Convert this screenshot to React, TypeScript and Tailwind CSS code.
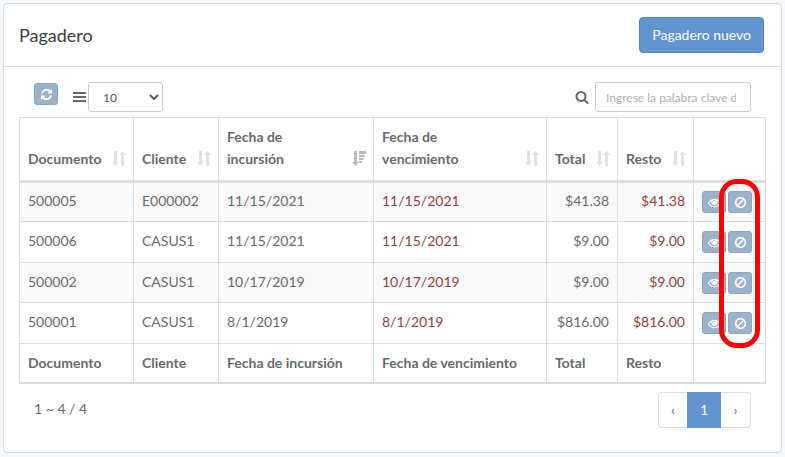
import React from 'react';

const paths = {
  refresh:
    'M1639 1056q0 5-1 7-64 268-268 434.5t-478 166.5q-146 0-282.5-55t-243.5-157l-129 129q-19 19-45 19t-45-19-19-45v-448q0-26 19-45t45-19h448q26 0 45 19t19 45-19 45l-137 137q71 66 161 102t187 36q134 0 250-65t186-179q11-17 53-117 8-23 30-23h192q13 0 22.5 9.5t9.5 22.5zm25-800v448q0 26-19 45t-45 19h-448q-26 0-45-19t-19-45 19-45l138-138q-148-137-349-137-134 0-250 65t-186 179q-11 17-53 117-8 23-30 23h-199q-13 0-22.5-9.5t-9.5-22.5v-7q65-268 270-434.5t480-166.5q146 0 284 55.5t245 156.5l130-129q19-19 45-19t45 19 19 45z',
  eye: 'M1664 960q-152-236-381-353 61 104 61 225 0 185-131.5 316.5t-316.5 131.5-316.5-131.5-131.5-316.5q0-121 61-225-229 117-381 353 133 205 333.5 326.5t434.5 121.5 434.5-121.5 333.5-326.5zm-720-384q0-20-14-34t-34-14q-125 0-214.5 89.5t-89.5 214.5q0 20 14 34t34 14 34-14 14-34q0-86 61-147t147-61q20 0 34-14t14-34zm848 384q0 34-20 69-140 230-376.5 368.5t-499.5 138.5-499.5-139-376.5-368q-20-35-20-69t20-69q140-229 376.5-368t499.5-139 499.5 139 376.5 368q20 35 20 69z',
  ban: 'M1440 893q0-161-87-295l-754 753q137 89 297 89 111 0 211.5-43.5t173.5-116.5 116-174.5 43-212.5zm-999 299l755-754q-135-91-300-91-148 0-273 73t-198 199-73 274q0 162 89 299zm1223-299q0 157-61 300t-163.5 246-245 164-298.5 61-298.5-61-245-164-163.5-246-61-300 61-299.5 163.5-245.5 245-164 298.5-61 298.5 61 245 164 163.5 245.5 61 299.5z',
  search:
    'M1216 832q0-185-131.5-316.5t-316.5-131.5-316.5 131.5-131.5 316.5 131.5 316.5 316.5 131.5 316.5-131.5 131.5-316.5zm512 832q0 52-38 90t-90 38q-54 0-90-38l-343-342q-179 124-399 124-143 0-273.5-55.5t-225-150-150-225-55.5-273.5 55.5-273.5 150-225 225-150 273.5-55.5 273.5 55.5 225 150 150 225 55.5 273.5q0 220-124 399l343 343q37 37 37 90z',
};

function Icon({ name, className }: { name: keyof typeof paths; className: string }) {
  return (
    <svg viewBox="0 0 1792 1792" fill="currentColor" className={className} aria-hidden="true">
      <path d={paths[name]} />
    </svg>
  );
}

function SortIcon({ active = false }: { active?: boolean }) {
  return active ? (
    <svg viewBox="0 0 14 15" fill="#b4b7bb" className="h-[15px] w-[14px] shrink-0" aria-hidden="true">
      <path d="M2 0h3v11h2L3.500 15 0 11h2zM7 0H14v3H7zM7 4H12.500v2H7zM7 7H11.500v2H7zM7 10H10v2H7z" />
    </svg>
  ) : (
    <svg viewBox="0 0 14 15" fill="#dfe1e4" className="h-[15px] w-[14px] shrink-0" aria-hidden="true">
      <path d="M2 0h3v11h2L3.500 15 0 11h2zM9 15h3V4h2L10.500 0 7 4h2z" />
    </svg>
  );
}

function SmallButton({ icon, label }: { icon: keyof typeof paths; label: string }) {
  return (
    <button
      type="button"
      aria-label={label}
      className="flex h-[22px] w-6 shrink-0 items-center justify-center rounded-[3px] border border-[#8ba6c1] bg-[#9cb2ca] text-white"
    >
      <Icon name={icon} className="size-[13px]" />
    </button>
  );
}

const columns = [
  { title: 'Documento', col: 'w-[114px]' },
  { title: 'Cliente', col: 'w-[85px]' },
  { title: 'Fecha de incursión', col: 'w-[155px]', active: true },
  { title: 'Fecha de vencimiento', col: '' },
  { title: 'Total', col: 'w-[71px]' },
  { title: 'Resto', col: 'w-[76px]' },
];

const rows = [
  ['500005', 'E000002', '11/15/2021', '11/15/2021', '$41.38', '$41.38'],
  ['500006', 'CASUS1', '11/15/2021', '11/15/2021', '$9.00', '$9.00'],
  ['500002', 'CASUS1', '10/17/2019', '10/17/2019', '$9.00', '$9.00'],
  ['500001', 'CASUS1', '8/1/2019', '8/1/2019', '$816.00', '$816.00'],
];

const cell = 'border border-[#dddddd] px-2 pt-0 pb-0.5';

export default function App() {
  return (
    <div className="min-h-screen bg-[#f5f7f9] p-[3px] pb-1 font-[Lato,sans-serif] text-sm leading-[22px] text-[#676a6c]">
      <main className="rounded border border-[#d5dee8] bg-white">
        <header className="flex items-center justify-between border-b border-[#d5dee8] pt-[13px] pr-[17px] pb-[13px] pl-[15px]">
          <h1 className="text-lg leading-6 text-[#3a3d40]">Pagadero</h1>
          <button
            type="button"
            className="h-9 rounded border border-[#5384bf] bg-[#6294cf] px-3 text-sm text-white"
          >
            Pagadero nuevo
          </button>
        </header>

        <div className="px-[15px] pt-[15px] pb-6">
          <div className="flex items-center justify-between px-[15px] pb-[5px]">
            <div className="flex items-center">
              <div className="mr-[15px] pb-1.5">
                <SmallButton icon="refresh" label="Actualizar" />
              </div>
              <label htmlFor="page-size" aria-label="Filas por página">
                <svg viewBox="0 0 13 10" fill="currentColor" className="mr-0.5 h-[10px] w-[13px]" aria-hidden="true">
                  <path d="M0 0h13v2H0zM0 4h13v2H0zM0 8h13v2H0z" />
                </svg>
              </label>
              <select
                id="page-size"
                defaultValue="10"
                className="h-[30px] w-[75px] rounded-[3px] border border-[#cccccc] bg-white pl-[10px] text-xs text-[#555555]"
              >
                <option>10</option>
                <option>25</option>
                <option>50</option>
              </select>
            </div>
            <div className="flex items-center gap-[6px]">
              <label htmlFor="search" aria-label="Buscar">
                <Icon name="search" className="size-[14px]" />
              </label>
              <input
                id="search"
                type="text"
                placeholder="Ingrese la palabra clave de búsqueda"
                className="h-[30px] w-[156px] rounded-[3px] border border-[#cccccc] pr-[14px] pl-[10px] text-xs placeholder:text-[#b0b0b0]"
              />
            </div>
          </div>

          <div className="relative">
            <table className="w-full table-fixed border-collapse">
              <colgroup>
                {columns.map((c) => (
                  <col key={c.title} className={c.col} />
                ))}
                <col className="w-[72px]" />
              </colgroup>
              <thead>
                <tr className="h-16">
                  {columns.map((c) => (
                    <th
                      key={c.title}
                      className="border border-b-3 border-[#dddddd] pt-2 pr-[7px] pb-2.5 pl-2 text-left align-bottom font-bold"
                    >
                      <div className="flex items-end justify-between">
                        <span className={c.title.startsWith('Fecha') ? 'w-24' : ''}>{c.title}</span>
                        <span className="pb-1">
                          <SortIcon active={c.active} />
                        </span>
                      </div>
                    </th>
                  ))}
                  <th className="border border-b-3 border-[#dddddd]" aria-label="Acciones" />
                </tr>
              </thead>
              <tbody>
                {rows.map((row) => (
                  <tr key={row[0]} className="h-10 odd:bg-[#f9f9f9] even:h-[41px]">
                    <td className={cell}>{row[0]}</td>
                    <td className={cell}>{row[1]}</td>
                    <td className={cell}>{row[2]}</td>
                    <td className={`${cell} text-[#8c4340]`}>{row[3]}</td>
                    <td className={`${cell} text-right`}>{row[4]}</td>
                    <td className={`${cell} text-right text-[#8c4340]`}>{row[5]}</td>
                    <td className="border border-[#dddddd] px-2 py-0">
                      <div className="flex gap-0.5">
                        <SmallButton icon="eye" label={`Ver ${row[0]}`} />
                        <SmallButton icon="ban" label={`Anular ${row[0]}`} />
                      </div>
                    </td>
                  </tr>
                ))}
              </tbody>
              <tfoot>
                <tr className="h-[39px]">
                  {columns.map((c) => (
                    <th key={c.title} className="border border-b-2 border-[#dddddd] px-2 text-left font-bold">
                      {c.title}
                    </th>
                  ))}
                  <td className="border border-b-2 border-[#dddddd]" />
                </tr>
              </tfoot>
            </table>
            <div className="pointer-events-none absolute top-[62px] right-[6px] h-[169px] w-[41px] rounded-[18px] border-5 border-[#ff0000]" />
          </div>

          <div className="flex items-start justify-between px-[15px] pt-2">
            <p className="pt-[6px]">1 ~ 4 / 4</p>
            <nav aria-label="Paginación" className="flex h-9">
              <button
                type="button"
                aria-label="Anterior"
                className="w-[29px] rounded-l border border-r-0 border-[#dddddd] text-sm"
              >
                ‹
              </button>
              <button type="button" aria-current="page" className="w-[34px] bg-[#6294cf] text-white">
                1
              </button>
              <button
                type="button"
                aria-label="Siguiente"
                className="w-[30px] rounded-r border border-l-0 border-[#dddddd] text-sm"
              >
                ›
              </button>
            </nav>
          </div>
        </div>
      </main>
    </div>
  );
}
